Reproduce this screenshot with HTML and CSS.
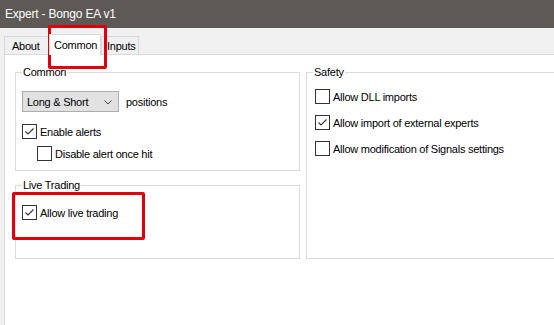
FILE: index.html
```html
<!DOCTYPE html>
<html lang="en">
<head>
    <meta charset="UTF-8">
    <meta name="viewport" content="width=device-width, initial-scale=1.0">
    <title>Expert - Bongo EA v1</title>
    <link rel="stylesheet" href="styles.css">
</head>
<body>
    <div class="titlebar">Expert - Bongo EA v1</div>

    <div class="tabstrip">
        <div class="tab">About</div>
        <div class="tab active">Common</div>
        <div class="tab">Inputs</div>
    </div>

    <div class="panel">
        <fieldset class="group group-common">
            <legend>Common</legend>
            <div class="select-row">
                <div class="select">
                    <span>Long &amp; Short</span>
                    <svg class="chevron" width="8" height="5" viewBox="0 0 8 5"><path d="M0.5 0.5 L4 4 L7.5 0.5" fill="none" stroke="#444" stroke-width="1"/></svg>
                </div>
                <span class="select-label">positions</span>
            </div>
            <label class="check checked">Enable alerts</label>
            <label class="check indent">Disable alert once hit</label>
        </fieldset>

        <fieldset class="group group-live">
            <legend>Live Trading</legend>
            <label class="check checked">Allow live trading</label>
        </fieldset>

        <fieldset class="group group-safety">
            <legend>Safety</legend>
            <label class="check">Allow DLL imports</label>
            <label class="check checked">Allow import of external experts</label>
            <label class="check">Allow modification of Signals settings</label>
        </fieldset>
    </div>

    <!-- red highlight boxes drawn over the dialog -->
    <div class="mark mark-tab"></div>
    <div class="mark mark-live"></div>
</body>
</html>
```
FILE: styles.css
```css
:root {
    --title-bg: #5d5955;
    --strip-bg: #f0f0f0;
    --panel-bg: #fff;
    --line: #d9d9d9;
    --group-line: #dcdcdc;
    --text: #000;
    --mark: #e0000c;
}

* {
    margin: 0;
    padding: 0;
    box-sizing: border-box;
}

html, body {
    height: 100%;
}

body {
    position: relative;
    overflow: hidden;
    display: flex;
    flex-direction: column;
    background: var(--strip-bg);
    color: var(--text);
    font-family: "Liberation Sans", Arial, sans-serif;
    font-size: 11px;
    letter-spacing: -0.25px;
}

.titlebar {
    height: 28px;
    padding: 7px 0 0 5px;
    background: var(--title-bg);
    color: #fff;
    font-size: 12px;
    letter-spacing: -0.2px;
    line-height: 15px;
}

.tabstrip {
    height: 26px;
    display: flex;
    align-items: flex-end;
    padding-left: 4px;
}

.tab {
    height: 18px;
    padding: 2px 0 0 7px;
    border: 1px solid var(--line);
    border-bottom: none;
    background: var(--strip-bg);
    line-height: 14px;
}

.tab:nth-child(1) {
    width: 45px;
}

.tab:nth-child(3) {
    width: 38px;
    padding-left: 5px;
}

.tab.active {
    position: relative;
    z-index: 1;
    width: 52px;
    height: 21px;
    margin-bottom: -1px;
    padding: 3px 0 0 4px;
    background: var(--panel-bg);
}

.panel {
    flex: 1;
    margin-left: 4px;
    padding: 10px 0 0 10px;
    border-top: 1px solid var(--line);
    border-left: 1px solid var(--line);
    background: var(--panel-bg);
    display: grid;
    grid-template-columns: 285px 1fr;
    grid-template-rows: 106px 81px;
    column-gap: 6px;
    row-gap: 7px;
    align-content: start;
}

.group {
    min-width: 0;
    border: 1px solid var(--group-line);
    padding: 0 6px;
}

.group legend {
    padding: 0 1px;
    line-height: 15px;
}

.group-common {
    padding-top: 11px;
}

.group-live {
    padding-top: 12px;
}

/* the dialog is cut off on the right, so this group has no right edge */
.group-safety {
    grid-column: 2;
    grid-row: 1 / span 2;
    padding: 9px 8px 0;
    border-right: none;
}

.group-safety legend {
    margin-left: -2px;
}

.select-row {
    display: flex;
    align-items: center;
    height: 21px;
    margin-bottom: 12px;
}

.select {
    width: 97px;
    height: 21px;
    display: flex;
    align-items: center;
    justify-content: space-between;
    padding: 0 6px 0 4px;
    border: 1px solid #adadad;
    background: #e1e1e1;
}

.chevron {
    margin-top: 1px;
}

.select-label {
    margin-left: 7px;
}

.check {
    display: flex;
    align-items: center;
    height: 15px;
    margin-bottom: 7px;
}

.group-safety .check {
    margin-bottom: 11px;
}

.check::before {
    content: "";
    flex: none;
    width: 13px;
    height: 13px;
    margin-right: 3px;
    border: 1px solid #333;
    background: #fff;
}

.check.checked::before {
    background: #fff url("data:image/svg+xml,%3Csvg xmlns='http://www.w3.org/2000/svg' width='11' height='11' viewBox='0 0 11 11'%3E%3Cpath d='M1.5 5.5 L4 8 L9.5 2.5' fill='none' stroke='%23333' stroke-width='1.1'/%3E%3C/svg%3E") center / 11px 11px no-repeat;
}

.check.indent {
    margin-left: 15px;
}

.mark {
    position: absolute;
    border: 3px solid var(--mark);
    border-radius: 2px;
}

.mark-tab {
    left: 48px;
    top: 25px;
    width: 59px;
    height: 44px;
}

.mark-live {
    left: 12px;
    top: 192px;
    width: 133px;
    height: 48px;
}
```
